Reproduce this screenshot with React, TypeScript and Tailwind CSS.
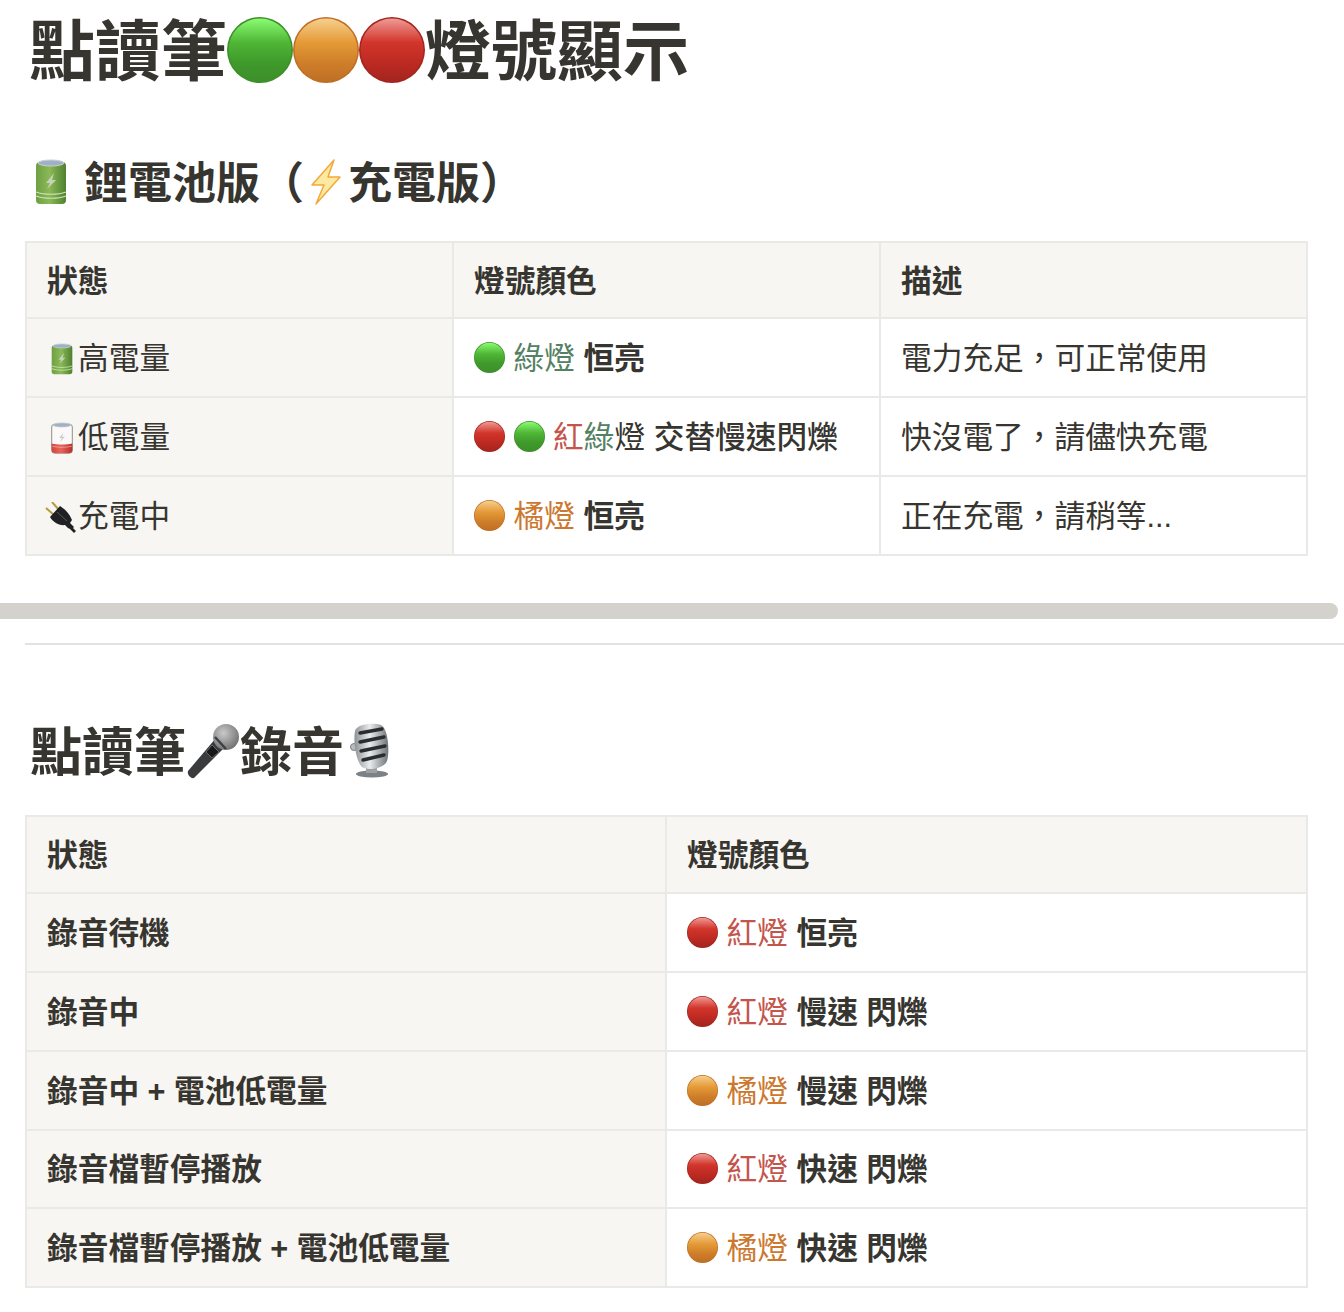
const fontStack = { fontFamily: '"Liberation Sans", "Noto Sans CJK TC", sans-serif' };

type DotColor = "green" | "orange" | "red";

const dotStops: Record<DotColor, [string, string, string, string]> = {
  green: ["#8afc72", "#4fb636", "#3f9a2b", "#3d8f2a"],
  orange: ["#f6cf8e", "#e59a37", "#cf7f2a", "#bf6f24"],
  red: ["#ee9a94", "#d2352b", "#bd2a22", "#a3251f"],
};

// traffic light dot emoji
function Dot({ color, size }: { color: DotColor; size: number }) {
  const s = dotStops[color];
  const id = `dot-${color}`;
  return (
    <svg width={size} height={size} viewBox="0 0 64 64" className="inline-block shrink-0 align-[-0.14em]">
      <defs>
        <linearGradient id={id} x1="0" y1="0" x2="0" y2="1">
          <stop offset="0" stopColor={s[0]} />
          <stop offset="0.38" stopColor={s[1]} />
          <stop offset="0.7" stopColor={s[2]} />
          <stop offset="1" stopColor={s[3]} />
        </linearGradient>
      </defs>
      <circle cx="32" cy="32" r="32" fill={s[3]} />
      <circle cx="32" cy="32" r="30.5" fill={`url(#${id})`} />
    </svg>
  );
}

function Battery({ low = false, width, height }: { low?: boolean; width: number; height: number }) {
  const id = low ? "battery-low" : "battery-full";
  return (
    <svg width={width} height={height} viewBox="0 0 32 46" className="inline-block shrink-0">
      <defs>
        <linearGradient id={id} x1="0" y1="0" x2="1" y2="0">
          <stop offset="0" stopColor={low ? "#d8423a" : "#6f9f45"} />
          <stop offset="0.45" stopColor={low ? "#e8645b" : "#8ab956"} />
          <stop offset="1" stopColor={low ? "#b92f29" : "#4f8030"} />
        </linearGradient>
      </defs>
      {low ? (
        <>
          <rect x="1" y="3" width="30" height="42" rx="4" fill="#fbf8f7" stroke="#8b8b8b" strokeWidth="1.4" />
          <path d="M1 31 C9 33 23 33 31 31 V41 C31 44 28 45 25 45 H7 C4 45 1 44 1 41 Z" fill={`url(#${id})`} />
          <path d="M2 35 C10 37 22 37 30 35" stroke="#f3b6b0" strokeWidth="1" fill="none" />
          <path d="M18 15 L12 23 H16 L13 29 L20 21 H16 Z" fill="#c9c9c9" />
        </>
      ) : (
        <>
          <rect x="1" y="3" width="30" height="42" rx="4" fill={`url(#${id})`} />
          <path d="M1 33 C9 36 23 36 31 33 M1 37 C9 40 23 40 31 37" stroke="#cfe3b4" strokeWidth="1.2" fill="none" />
          <path d="M19 14 L11 24 H15 L12 30 L21 21 H17 Z" fill="#c6d3b8" />
        </>
      )}
      <ellipse cx="16" cy="4" rx="13" ry="3" fill="#9fb1c4" stroke="#c6cfd4" strokeWidth="1" />
    </svg>
  );
}

function Plug() {
  return (
    <svg width="33" height="31" viewBox="0 0 33 31" className="inline-block shrink-0">
      <path d="M1 6 L9 13 M7 0 L14 8" stroke="#b89a3e" strokeWidth="2" />
      <path d="M15 4 C18 6 24 10 27 18 L25 21 L29 25 L28 26 L31 29 L29 31 L25 27 L23 26 L20 23 C14 24 8 20 5 15 Z" fill="#1f2123" />
      <path d="M12 10 L22 19" stroke="#55575a" strokeWidth="1" />
    </svg>
  );
}

function Bolt() {
  return (
    <svg width="44" height="46" viewBox="0 0 44 46" className="inline-block shrink-0">
      <path d="M30 1 L8 26 H20 L12 45 L36 18 H24 Z" fill="#fde9a0" stroke="#f2a93b" strokeWidth="1.5" strokeLinejoin="round" />
    </svg>
  );
}

function HandMic() {
  return (
    <svg width="54" height="56" viewBox="0 0 54 56" className="inline-block shrink-0">
      <defs>
        <radialGradient id="mic-head" cx="0.4" cy="0.35" r="0.7">
          <stop offset="0" stopColor="#c9c9c9" />
          <stop offset="1" stopColor="#6e6e6e" />
        </radialGradient>
      </defs>
      <path d="M30 15 L39 24 L8 55 C5 56 1 52 2 48 Z" fill="#3a3b3d" />
      <path d="M26 22 L33 29 L26 35 L20 29 Z" fill="#17181a" stroke="#77787a" strokeWidth="0.8" />
      <circle cx="40" cy="14" r="13" fill="url(#mic-head)" />
      <path d="M29 14 L40 26" stroke="#3e3f41" strokeWidth="2.4" />
    </svg>
  );
}

function StudioMic() {
  return (
    <svg width="44" height="56" viewBox="0 0 44 56" className="inline-block shrink-0 ml-[6px]">
      <defs>
        <linearGradient id="studio-body" x1="0" y1="0" x2="1" y2="0">
          <stop offset="0" stopColor="#8d9194" />
          <stop offset="0.45" stopColor="#e9ecee" />
          <stop offset="1" stopColor="#6f7376" />
        </linearGradient>
      </defs>
      <ellipse cx="22" cy="51" rx="16" ry="3.5" fill="#7b8184" />
      <rect x="16" y="42" width="11" height="8" fill="#9ca1a4" />
      <circle cx="4" cy="24" r="3.5" fill="#b8bcbe" stroke="#7c7f82" />
      <path d="M5 8 C6 1 24 -1 31 2 C38 5 40 28 37 38 C34 46 17 48 12 44 C6 38 3 18 5 8 Z" fill="url(#studio-body)" />
      <g stroke="#2a2c2e" strokeWidth="3.4" strokeLinecap="round">
        <path d="M10 10 L32 6" />
        <path d="M10 19 L34 14" />
        <path d="M11 28 L35 23" />
        <path d="M13 37 L34 32" />
      </g>
    </svg>
  );
}

const cellBase = "border-2 border-[#e9e9e7] px-[20px] pt-[2px] align-middle";

function EmojiBox({ children }: { children: React.ReactNode }) {
  return <span className="inline-flex w-[31px] h-[36px] items-center justify-center align-[-0.2em] -ml-[1px] mr-[1px]">{children}</span>;
}

function Head({ labels, widths, height }: { labels: string[]; widths: string[]; height: string }) {
  return (
    <>
      <colgroup>
        {widths.map((w, i) => (
          <col key={i} className={w} />
        ))}
      </colgroup>
      <thead>
        <tr className={height}>
          {labels.map((l) => (
            <th key={l} className="border-2 border-[#e9e9e7] px-[20px] pt-[3px] align-middle bg-[#f7f6f3] text-left font-bold">
              {l}
            </th>
          ))}
        </tr>
      </thead>
    </>
  );
}

const Green = ({ children }: { children: React.ReactNode }) => <span className="text-[#548164]">{children}</span>;
const Red = ({ children }: { children: React.ReactNode }) => <span className="text-[#c4554d]">{children}</span>;
const Orange = ({ children }: { children: React.ReactNode }) => <span className="text-[#cc782f]">{children}</span>;
const Strong = ({ children }: { children: React.ReactNode }) => <span className="font-bold">{children}</span>;

const recordRows: { state: string; height: string; light: React.ReactNode }[] = [
  { state: "錄音待機", height: "h-[79px]", light: <><Dot color="red" size={31} /> <Red>紅燈</Red> <Strong>恒亮</Strong></> },
  { state: "錄音中", height: "h-[79px]", light: <><Dot color="red" size={31} /> <Red>紅燈</Red> <Strong>慢速 閃爍</Strong></> },
  { state: "錄音中 + 電池低電量", height: "h-[79px]", light: <><Dot color="orange" size={31} /> <Orange>橘燈</Orange> <Strong>慢速 閃爍</Strong></> },
  { state: "錄音檔暫停播放", height: "h-[78px]", light: <><Dot color="red" size={31} /> <Red>紅燈</Red> <Strong>快速 閃爍</Strong></> },
  { state: "錄音檔暫停播放 + 電池低電量", height: "h-[79px]", light: <><Dot color="orange" size={31} /> <Orange>橘燈</Orange> <Strong>快速 閃爍</Strong></> },
];

export default function App() {
  return (
    <div className="w-[1344px] h-[1312px] overflow-hidden bg-white text-[#37352f] text-[30.7px] leading-[40px]" style={fontStack}>
      <h1 className="h-[100px] pl-[29px] flex items-center text-[66px] font-bold leading-none">
        <span className="pt-[3px]">點讀筆</span>
        <Dot color="green" size={66} />
        <Dot color="orange" size={66} />
        <Dot color="red" size={66} />
        <span className="pt-[3px]">燈號顯示</span>
      </h1>

      <h2 className="mt-[52px] h-[60px] pl-[30px] flex items-center text-[44px] font-bold leading-none whitespace-pre">
        <span className="w-[44px] flex justify-center pr-[3px]">
          <Battery width={32} height={46} />
        </span>
        <span className="w-[10px]" />
        <span className="pt-[3px]">鋰電池版（</span>
        <Bolt />
        <span className="pt-[3px]">充電版）</span>
      </h2>

      <div className="mt-[29px] pl-[25px]">
        <table className="w-[1281px] table-fixed border-collapse">
          <Head labels={["狀態", "燈號顏色", "描述"]} widths={["w-[427px]", "w-[427px]", "w-[427px]"]} height="h-[76px]" />
          <tbody>
            <tr className="h-[79px]">
              <td className={`${cellBase} bg-[#f7f6f3]`}>
                <EmojiBox>
                  <Battery width={22} height={32} />
                </EmojiBox>
                高電量
              </td>
              <td className={cellBase}>
                <Dot color="green" size={31} /> <Green>綠燈</Green> <Strong>恒亮</Strong>
              </td>
              <td className={cellBase}>電力充足，可正常使用</td>
            </tr>
            <tr className="h-[79px]">
              <td className={`${cellBase} bg-[#f7f6f3]`}>
                <EmojiBox>
                  <Battery low width={22} height={32} />
                </EmojiBox>
                低電量
              </td>
              <td className={`${cellBase} whitespace-nowrap`}>
                <Dot color="red" size={31} /> <Dot color="green" size={31} /> <Red>紅</Red>
                <Green>綠</Green>燈 <span className="font-medium">交替慢速閃爍</span>
              </td>
              <td className={cellBase}>快沒電了，請儘快充電</td>
            </tr>
            <tr className="h-[79px]">
              <td className={`${cellBase} bg-[#f7f6f3]`}>
                <EmojiBox>
                  <Plug />
                </EmojiBox>
                充電中
              </td>
              <td className={cellBase}>
                <Dot color="orange" size={31} /> <Orange>橘燈</Orange> <Strong>恒亮</Strong>
              </td>
              <td className={cellBase}>正在充電，請稍等...</td>
            </tr>
          </tbody>
        </table>
      </div>

      {/* horizontal scrollbar thumb */}
      <div className="mt-[47px] w-[1338px] h-[16px] rounded-r-full bg-[#d3d2cd]" />
      <div className="mt-[24px] ml-[25px] h-[2px] bg-[#e3e2e0]" />

      <h2 className="mt-[71px] h-[70px] pl-[30px] flex items-center text-[52px] font-bold leading-none">
        <span className="pt-[3px]">點讀筆</span>
        <HandMic />
        <span className="pt-[3px]">錄音</span>
        <StudioMic />
      </h2>

      <div className="mt-[29px] pl-[25px]">
        <table className="w-[1281px] table-fixed border-collapse">
          <Head labels={["狀態", "燈號顏色"]} widths={["w-[640px]", "w-[641px]"]} height="h-[77px]" />
          <tbody>
            {recordRows.map((row) => (
              <tr key={row.state} className={row.height}>
                <td className={`${cellBase} bg-[#f7f6f3] font-bold`}>{row.state}</td>
                <td className={cellBase}>{row.light}</td>
              </tr>
            ))}
          </tbody>
        </table>
      </div>
    </div>
  );
}
